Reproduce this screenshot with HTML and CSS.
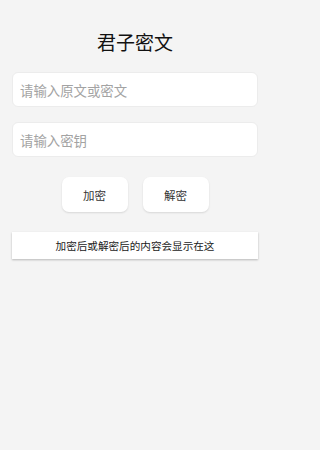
FILE: index.html
```html
<!DOCTYPE html>
<html lang="zh">
<head>
<meta charset="utf-8">
<link rel="stylesheet" href="styles.css">
</head>
<body>
<div class="page">
  <h1 class="title">君子密文</h1>
  <div class="field"><span class="placeholder">请输入原文或密文</span></div>
  <div class="field"><span class="placeholder">请输入密钥</span></div>
  <div class="actions">
    <div class="btn">加密</div>
    <div class="btn">解密</div>
  </div>
  <div class="result">加密后或解密后的内容会显示在这</div>
</div>
</body>
</html>
```
FILE: styles.css
```css
html, body {
  margin: 0;
  padding: 0;
  background: #f4f4f4;
  font-family: "Noto Sans CJK SC", "Noto Sans", sans-serif;
}
.page {
  width: 270px;
  height: 450px;
  padding: 0 12px;
  box-sizing: border-box;
  display: flex;
  flex-direction: column;
}
.title {
  margin: 30px 0 0;
  height: 24px;
  line-height: 24px;
  font-size: 19px;
  font-weight: 400;
  color: #111;
  text-align: center;
}
.field {
  margin-top: 18px;
  height: 35px;
  background: #fff;
  border: 1px solid #ececec;
  border-radius: 6px;
  box-sizing: border-box;
  display: flex;
  align-items: center;
  padding-left: 7px;
}
.field + .field {
  margin-top: 15px;
}
.placeholder {
  font-size: 13.4px;
  color: #a3a3a3;
}
.actions {
  margin-top: 20px;
  display: flex;
  justify-content: center;
  gap: 15px;
}
.btn {
  width: 66px;
  height: 35px;
  background: #fff;
  border-radius: 7px;
  box-shadow: 0 1px 2px rgba(0,0,0,0.12);
  display: flex;
  align-items: center;
  justify-content: center;
  font-size: 11.5px;
  color: #333;
}
.result {
  margin-top: 20px;
  height: 27px;
  background: #fff;
  box-shadow: 0 1px 2px rgba(0,0,0,0.25);
  display: flex;
  align-items: center;
  justify-content: center;
  font-size: 10.6px;
  color: #1a1a1a;
}
```
